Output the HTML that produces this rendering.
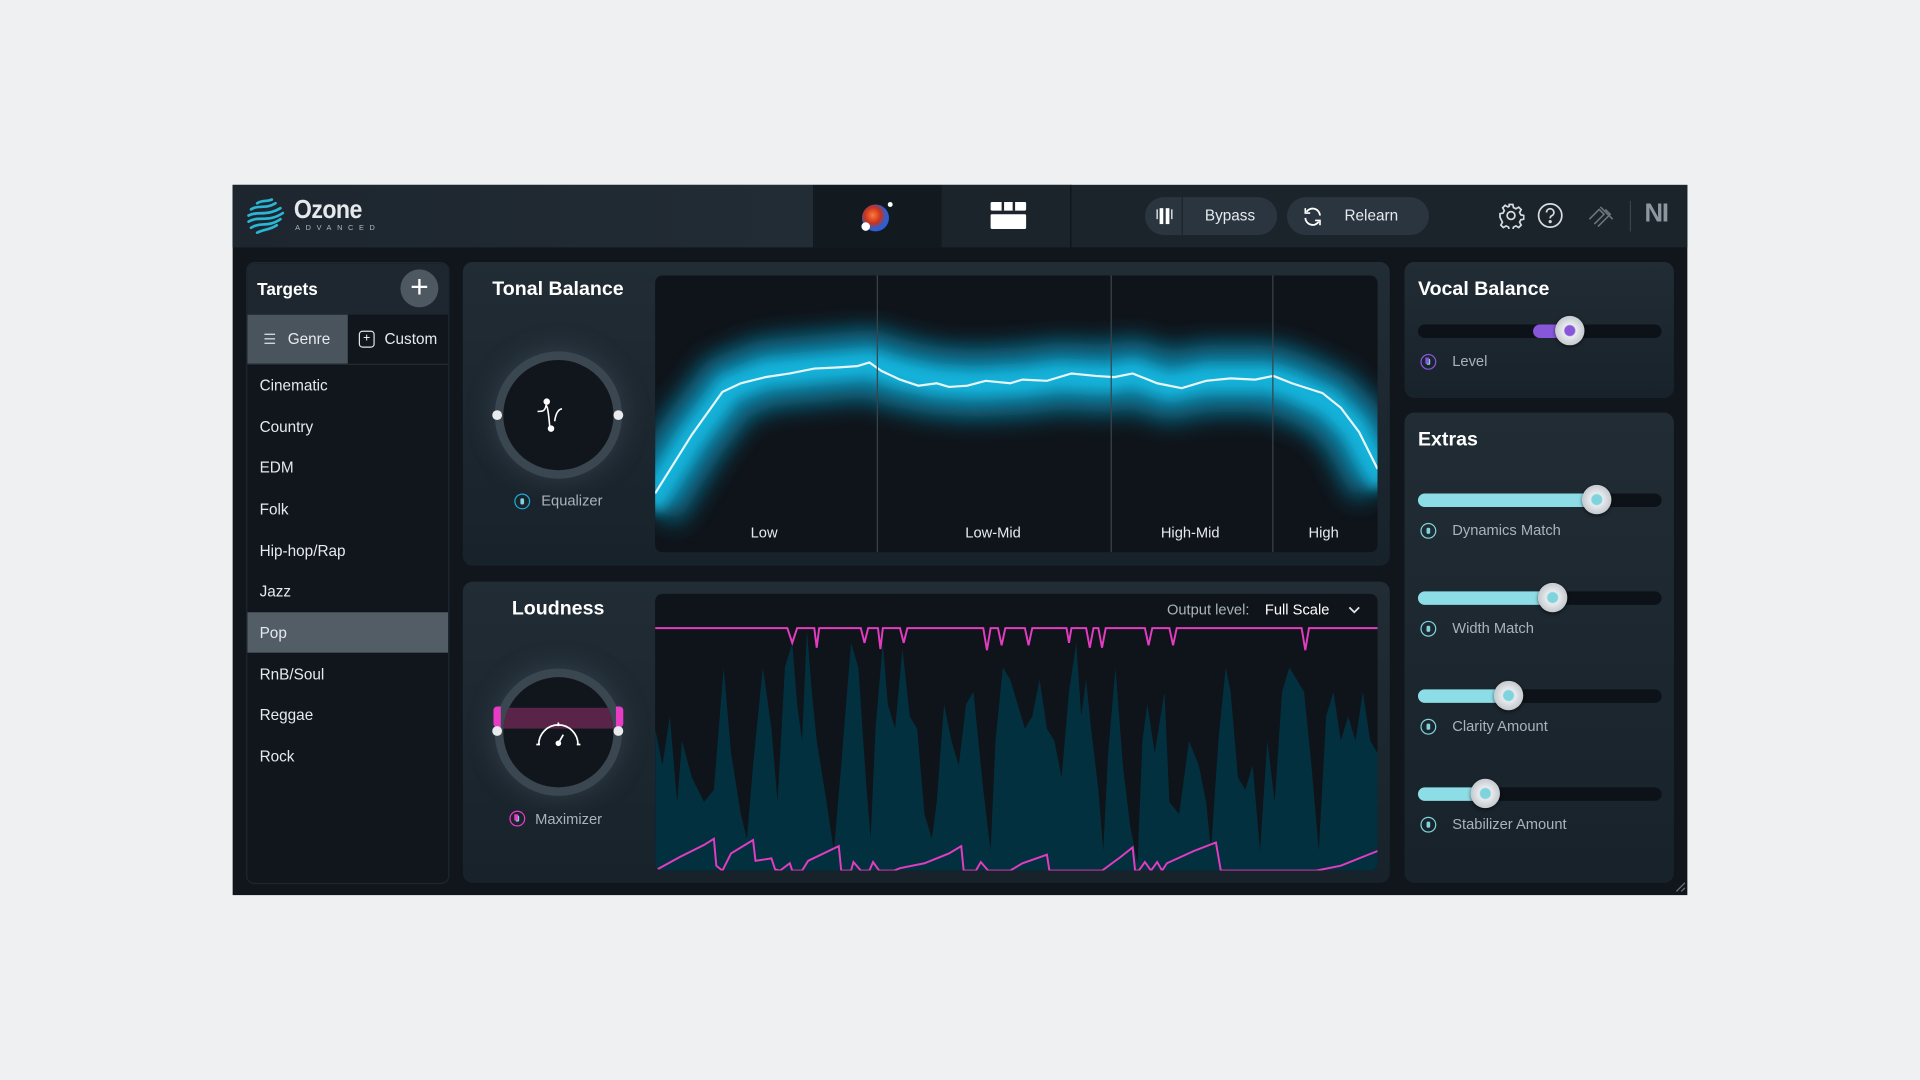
<!DOCTYPE html>
<html><head><meta charset="utf-8"><style>
html,body{margin:0;padding:0;width:1920px;height:1080px;overflow:hidden;background:#eef0f2;font-family:"Liberation Sans",sans-serif;}
#s{position:absolute;left:0;top:0;width:1568px;height:882px;transform:scale(1.22449);transform-origin:0 0;}
.a{position:absolute;}
.app{left:190px;top:151px;width:1188px;height:580px;background:#10161c;}
.hdr{left:0;top:0;width:1188px;height:51px;background:#1b232b;}
.panel{background:linear-gradient(#212c35,#18222a);border-radius:8px;}
.t{color:#fff;font-weight:bold;font-size:16px;}
.li{position:absolute;left:10px;color:#e6eaee;font-size:12.5px;}
.lab{color:#aab3bb;font-size:12px;}
.pill{background:#2a353f;border-radius:16px;color:#e6eaee;font-size:12.5px;}
.track{position:absolute;left:11px;width:199px;height:11px;border-radius:6px;background:#0c1218;}
.fill{position:absolute;left:0;top:0;height:11px;border-radius:6px;background:#8ddde6;}
.knob{position:absolute;top:-7px;width:24px;height:24px;border-radius:50%;background:radial-gradient(circle at 50% 50%,#7fd3dc 0 4px,#e8ebee 5px,#c4c9ce 12px);box-shadow:0 1px 3px rgba(0,0,0,.6);}
.pw{position:absolute;width:13px;height:13px;border-radius:50%;border:1.5px solid #7fd3dc;box-sizing:border-box;}
.pw:after{content:"";position:absolute;left:3.5px;top:2.5px;width:3px;height:5px;border-radius:1px;background:#7fd3dc;}
</style></head><body><div id="s">
<div class="a app">
 <div class="a hdr">
  <div class="a" style="left:0;top:0;width:474px;height:51px;background:linear-gradient(90deg,#1d262e,#222c35)"></div>
  <svg class="a" style="left:10px;top:9px" width="34" height="34" viewBox="0 0 34 34"><g stroke="#2bb6d6" stroke-width="2.2" fill="none" stroke-linecap="round"><path d="M10 6c4-3 8-1 12-3"/><path d="M5 11c6-4 12 0 20-5"/><path d="M3 16c8-4 14 1 26-6"/><path d="M3 21c8-5 16 1 28-7"/><path d="M5 26c8-5 14 0 24-7"/><path d="M10 30c6-3 10-2 16-6"/></g></svg>
  <div class="a" style="left:50px;top:9px;color:#e6e9ec;font-size:21px;font-weight:bold;letter-spacing:-0.5px;transform:scaleX(.9);transform-origin:0 0">Ozone</div>
  <div class="a" style="left:51px;top:33px;color:#aeb7bf;font-size:6px;letter-spacing:4.6px">ADVANCED</div>
  <div class="a" style="left:474px;top:0;width:105px;height:51px;background:#12191f"></div>
  <svg class="a" style="left:510px;top:12px" width="32" height="28" viewBox="0 0 32 28"><defs><radialGradient id="og" cx="40%" cy="40%"><stop offset="0" stop-color="#ff7a3a"/><stop offset=".6" stop-color="#c8321e"/><stop offset="1" stop-color="#2d5fd1"/></radialGradient></defs><circle cx="15" cy="15" r="11" fill="url(#og)"/><circle cx="7" cy="22" r="3.5" fill="#fff"/><circle cx="27" cy="4" r="2" fill="#fff"/></svg>
  <div class="a" style="left:579px;top:0;width:105px;height:51px;background:#1b232b;border-right:1px solid #0e1418"></div>
  <div class="a" style="left:619px;top:14px;width:29px;height:7px;background:#fff;border-radius:1px"></div>
  <div class="a" style="left:619px;top:24px;width:29px;height:12px;background:#fff;border-radius:1px"></div>
  <div class="a" style="left:628px;top:14px;width:2px;height:7px;background:#1b232b"></div><div class="a" style="left:637px;top:14px;width:2px;height:7px;background:#1b232b"></div>
  <div class="a pill" style="left:745px;top:10px;width:108px;height:31px"><div class="a" style="left:30px;top:0;width:1px;height:31px;background:#1b232b"></div>
   <svg class="a" style="left:8px;top:7px" width="16" height="17" viewBox="0 0 16 17"><rect x="4" y="2" width="3" height="13" fill="#fff"/><rect x="9" y="2" width="3" height="13" fill="#fff"/><path d="M2 3v8M14 3v8" stroke="#fff" stroke-width="1"/></svg>
   <div class="a" style="left:49px;top:8px">Bypass</div></div>
  <div class="a pill" style="left:861px;top:10px;width:116px;height:31px">
   <svg class="a" style="left:12px;top:7px" width="18" height="18" viewBox="0 0 18 18" fill="none" stroke="#fff" stroke-width="1.5"><path d="M15 8a6 6 0 0 0-11-3M3 10a6 6 0 0 0 11 3"/><path d="M3 2v4h4M15 16v-4h-4" stroke-width="1.3"/></svg>
   <div class="a" style="left:47px;top:8px">Relearn</div></div>
  <svg class="a" style="left:1033px;top:14px" width="22" height="22" viewBox="0 0 22 22" fill="none" stroke="#d7dce0" stroke-width="1.4"><circle cx="11" cy="11" r="3.2"/><path d="M9.5 2h3l.5 2.5 2 1 2.3-1.3 2 2-1.3 2.3 1 2 2.5.5v3l-2.5.5-1 2 1.3 2.3-2 2-2.3-1.3-2 1-.5 2.5h-3l-.5-2.5-2-1-2.3 1.3-2-2 1.3-2.3-1-2L2 12.5v-3l2.5-.5 1-2L4.2 4.7l2-2L8.5 4l1-.5z"/></svg>
  <svg class="a" style="left:1065px;top:14px" width="22" height="22" viewBox="0 0 22 22" fill="none" stroke="#d7dce0" stroke-width="1.4"><circle cx="11" cy="11" r="9.5"/><path d="M8 8.5a3 3 0 1 1 4 2.8c-.8.4-1 1-1 2"/><circle cx="11" cy="16" r=".6" fill="#d7dce0"/></svg>
  <svg class="a" style="left:1105px;top:12px" width="26" height="26" viewBox="0 0 26 26" fill="none" stroke="#6b747c" stroke-width="1.3"><path d="M3 16l8-8 4 4-8 8M10 22l10-10-4-4M12 6l10 10"/></svg>
  <div class="a" style="left:1141px;top:13px;width:1px;height:25px;background:#3a444d"></div>
  <div class="a" style="left:1153px;top:12px;color:#8d969e;font-size:21px;font-weight:bold;letter-spacing:-1px">NI</div>
 </div>
 <!-- Targets -->
 <div class="a" style="left:11px;top:63px;width:164px;height:506px;background:#10161c;border-radius:7px;border:1px solid #1e272f;overflow:hidden">
  <div class="a" style="left:0;top:0;width:164px;height:42px;background:#1e272f"></div>
  <div class="a t" style="left:8px;top:13px;font-size:14px">Targets</div>
  <div class="a" style="left:125px;top:5px;width:31px;height:31px;border-radius:50%;background:#4d5861;color:#fff;font-size:26px;line-height:29px;text-align:center;font-weight:300">+</div>
  <div class="a" style="left:0;top:42px;width:82px;height:40px;background:#4a545d"></div>
  <div class="a" style="left:0;top:82px;width:164px;height:1px;background:#232c34"></div>
  <div class="a" style="left:13px;top:55px;color:#cfd5da;font-size:12px">☰</div>
  <div class="a" style="left:33px;top:55px;color:#e6eaee;font-size:12.5px">Genre</div>
  <div class="a" style="left:91px;top:55px;width:11px;height:12px;border:1.3px solid #dfe3e7;border-radius:3px;color:#fff;font-size:10px;line-height:12px;text-align:center">+</div>
  <div class="a" style="left:112px;top:55px;color:#e6eaee;font-size:12.5px">Custom</div>
  <div class="li" style="top:93px">Cinematic</div>
  <div class="li" style="top:127px">Country</div>
  <div class="li" style="top:160px">EDM</div>
  <div class="li" style="top:194px">Folk</div>
  <div class="li" style="top:228px">Hip-hop/Rap</div>
  <div class="li" style="top:261px">Jazz</div>
  <div class="a" style="left:0;top:285px;width:164px;height:33px;background:#535d66"></div>
  <div class="li" style="top:295px">Pop</div>
  <div class="li" style="top:329px">RnB/Soul</div>
  <div class="li" style="top:362px">Reggae</div>
  <div class="li" style="top:396px">Rock</div>
 </div>
 <!-- Tonal Balance -->
 <div class="a panel" style="left:188px;top:63px;width:757px;height:248px">
  <div class="a t" style="left:24px;top:14px">Tonal Balance</div>
  <div class="a" style="left:26px;top:73px;width:104px;height:104px;border-radius:50%;background:#3a4650;box-shadow:0 0 24px rgba(120,140,160,.25)"></div>
  <div class="a" style="left:33px;top:80px;width:90px;height:90px;border-radius:50%;background:#10161c"></div>
  <div class="a" style="left:24px;top:121px;width:8px;height:8px;border-radius:50%;background:#e8eaec"></div>
  <div class="a" style="left:123px;top:121px;width:8px;height:8px;border-radius:50%;background:#e8eaec"></div>
  <svg class="a" style="left:58px;top:108px" width="40" height="34" viewBox="0 0 40 34" fill="none" stroke="#fff" stroke-width="1.3"><path d="M3 14c4 0 6 0 7-5 1 0 2 6 3 18M17 22c1-8 4-10 6-10"/><circle cx="10.5" cy="6" r="2" fill="#fff"/><circle cx="14" cy="28" r="2" fill="#fff"/></svg>
  <div class="pw" style="left:42px;top:189px;border-color:#22a9d6"></div>
  <div class="a lab" style="left:64px;top:188px">Equalizer</div>
  <div class="a" style="left:157px;top:11px;width:590px;height:226px;background:#0f141a;border-radius:6px;overflow:hidden">
   <svg width="590" height="226" viewBox="0 0 590 226">
    <defs><filter id="bl" x="-10%" y="-40%" width="120%" height="180%"><feGaussianBlur stdDeviation="10"/></filter><filter id="bl2" x="-10%" y="-40%" width="120%" height="180%"><feGaussianBlur stdDeviation="5"/></filter></defs>
    <path d="M-5 188 L30 132 L60 92 L90 80 L130 76 L175 72 L200 80 L230 86 L260 88 L300 86 L330 82 L370 84 L390 80 L420 90 L450 84 L500 84 L520 90 L550 104 L570 124 L595 170" stroke="#0a8fb5" stroke-width="55" fill="none" filter="url(#bl)" opacity=".85"/>
    <path d="M-5 188 L30 132 L60 92 L90 80 L130 76 L175 72 L200 80 L230 86 L260 88 L300 86 L330 82 L370 84 L390 80 L420 90 L450 84 L500 84 L520 90 L550 104 L570 124 L595 170" stroke="#12b8e0" stroke-width="22" fill="none" filter="url(#bl2)" opacity=".9"/>
    <path d="M0 178 L30 130 L55 95 L70 88 L90 83 L110 80 L130 76 L150 75 L165 74 L175 71 L185 78 L200 85 L215 90 L230 88 L240 91 L255 90 L270 86 L290 88 L300 85 L320 86 L340 80 L360 82 L375 83 L390 80 L410 88 L430 92 L450 86 L470 84 L490 85 L505 82 L520 88 L545 96 L560 108 L575 128 L590 158" stroke="#e8f6fa" stroke-width="1.8" fill="none"/>
    <g stroke="#3a444c" stroke-width="1"><line x1="181.5" y1="0" x2="181.5" y2="226"/><line x1="372.5" y1="0" x2="372.5" y2="226"/><line x1="504.5" y1="0" x2="504.5" y2="226"/></g>
    <g fill="#e6eaee" font-family="Liberation Sans" font-size="12" text-anchor="middle"><text x="89" y="214">Low</text><text x="276" y="214">Low-Mid</text><text x="437" y="214">High-Mid</text><text x="546" y="214">High</text></g>
   </svg>
  </div>
 </div>
 <!-- Loudness -->
 <div class="a panel" style="left:188px;top:324px;width:757px;height:246px">
  <div class="a t" style="left:40px;top:14px">Loudness</div>
  <div class="a" style="left:26px;top:71px;width:104px;height:104px;border-radius:50%;background:#3a4650;box-shadow:0 0 24px rgba(120,140,160,.25);overflow:hidden"></div>
  <div class="a" style="left:33px;top:78px;width:90px;height:90px;border-radius:50%;background:#10161c;overflow:hidden"><div class="a" style="left:0;top:25px;width:90px;height:17px;background:#5a2449"></div></div>
  <div class="a" style="left:25px;top:102px;width:6px;height:17px;background:#e83cc4;border-radius:3px 0 0 3px"></div>
  <div class="a" style="left:125px;top:102px;width:6px;height:17px;background:#e83cc4;border-radius:0 3px 3px 0"></div>
  <div class="a" style="left:24px;top:118px;width:8px;height:8px;border-radius:50%;background:#e8eaec"></div>
  <div class="a" style="left:123px;top:118px;width:8px;height:8px;border-radius:50%;background:#e8eaec"></div>
  <svg class="a" style="left:58px;top:111px" width="40" height="26" viewBox="0 0 40 26" fill="none" stroke="#fff" stroke-width="1.4"><path d="M4 22a16 16 0 1 1 32 0M2 22h3M35 22h3M20 4v3M20 21l4-7"/><circle cx="20" cy="21" r="1.6" fill="#fff"/></svg>
  <div class="pw" style="left:38px;top:187px;border-color:#e83cc4"></div><div class="a" style="left:41.5px;top:190px;width:3px;height:5px;background:#e83cc4"></div>
  <div class="a lab" style="left:59px;top:187px">Maximizer</div>
  <div class="a" style="left:157px;top:10px;width:590px;height:226px;background:#0f141a;border-radius:6px;overflow:hidden">
   <div class="a lab" style="left:418px;top:6px;font-size:12px">Output level:</div>
   <div class="a" style="left:498px;top:6px;color:#fff;font-size:12px">Full Scale</div>
   <svg class="a" style="left:566px;top:9px" width="10" height="8" viewBox="0 0 10 8"><path d="M1 2l4 4 4-4" stroke="#dfe3e7" stroke-width="1.5" fill="none"/></svg>
   <svg class="a" style="left:0;top:0" width="590" height="226" viewBox="0 0 590 226">
    <path fill="#03303f" d="M0 226 L0 110 L6 140 L12 100 L18 170 L22 120 L30 150 L40 170 L48 160 L56 60 L62 130 L70 180 L75 200 L80 140 L88 60 L95 110 L100 170 L106 60 L112 40 L116 90 L120 120 L124 30 L128 80 L132 120 L140 170 L146 210 L152 140 L160 40 L166 60 L172 150 L176 200 L180 110 L186 40 L190 90 L196 110 L202 45 L208 100 L214 110 L220 180 L226 200 L230 170 L236 90 L242 120 L248 140 L254 90 L260 80 L268 160 L274 210 L278 120 L284 60 L290 70 L296 90 L302 110 L308 100 L314 70 L320 110 L326 120 L332 150 L338 80 L344 40 L348 100 L352 70 L356 110 L362 160 L366 210 L370 130 L376 60 L382 140 L388 190 L394 220 L398 120 L402 90 L408 130 L416 80 L420 170 L428 180 L436 120 L444 140 L450 170 L454 210 L460 120 L466 60 L470 80 L476 150 L482 160 L488 140 L494 210 L500 120 L506 170 L512 80 L518 60 L524 70 L530 80 L536 140 L542 210 L548 100 L554 80 L560 120 L566 100 L572 120 L578 80 L584 120 L590 130 L590 226 Z"/>
    <path fill="none" stroke="#e33cc0" stroke-width="1.6" d="M0 28 L108 28 L112 40 L116 28 L130 28 L132 44 L134 28 L168 28 L171 40 L174 28 L182 28 L184 45 L186 28 L200 28 L203 40 L206 28 L268 28 L271 46 L274 28 L280 28 L283 42 L286 28 L302 28 L305 42 L308 28 L336 28 L338 40 L340 28 L352 28 L355 44 L358 28 L362 28 L365 44 L368 28 L400 28 L403 42 L406 28 L420 28 L423 42 L426 28 L528 28 L531 46 L534 28 L590 28"/>
    <path fill="none" stroke="#e33cc0" stroke-width="1.6" d="M0 226 L20 215 L40 205 L48 200 L50 222 L55 226 L62 212 L80 201 L82 218 L95 216 L98 225 L102 226 L110 220 L112 226 L120 226 L125 218 L150 206 L152 226 L160 226 L162 219 L168 226 L175 226 L178 219 L183 226 L195 226 L200 224 L220 220 L240 212 L250 206 L252 226 L262 226 L266 219 L272 226 L290 226 L300 220 L320 213 L322 226 L330 226 L340 226 L350 226 L365 226 L380 215 L390 207 L392 226 L395 226 L400 219 L405 226 L410 219 L414 226 L418 220 L440 210 L458 203 L462 226 L480 226 L490 226 L520 226 L540 226 L560 222 L590 210"/>
   </svg>
  </div>
 </div>
 <!-- Vocal balance -->
 <div class="a panel" style="left:957px;top:63px;width:220px;height:111px">
  <div class="a t" style="left:11px;top:14px">Vocal Balance</div>
  <div class="track" style="top:51px"><div class="fill" style="left:94px;width:30px;background:#8857d9"></div><div class="knob" style="left:112px;background:radial-gradient(circle,#8857d9 0 4px,#e8ebee 5px,#c4c9ce 12px)"></div></div>
  <div class="pw" style="left:13px;top:75px;border-color:#8857d9"></div><div class="a" style="left:16.5px;top:78px;width:3px;height:5px;background:#8857d9"></div>
  <div class="a lab" style="left:39px;top:74px">Level</div>
 </div>
 <!-- Extras -->
 <div class="a panel" style="left:957px;top:186px;width:220px;height:384px">
  <div class="a t" style="left:11px;top:14px">Extras</div>
  <div class="track" style="top:66px"><div class="fill" style="width:146px"></div><div class="knob" style="left:134px"></div></div>
  <div class="pw" style="left:13px;top:90px"></div><div class="a lab" style="left:39px;top:89px">Dynamics Match</div>
  <div class="track" style="top:146px"><div class="fill" style="width:110px"></div><div class="knob" style="left:98px"></div></div>
  <div class="pw" style="left:13px;top:170px"></div><div class="a lab" style="left:39px;top:169px">Width Match</div>
  <div class="track" style="top:226px"><div class="fill" style="width:74px"></div><div class="knob" style="left:62px"></div></div>
  <div class="pw" style="left:13px;top:250px"></div><div class="a lab" style="left:39px;top:249px">Clarity Amount</div>
  <div class="track" style="top:306px"><div class="fill" style="width:55px"></div><div class="knob" style="left:43px"></div></div>
  <div class="pw" style="left:13px;top:330px"></div><div class="a lab" style="left:39px;top:329px">Stabilizer Amount</div>
 </div>
 <svg class="a" style="left:1178px;top:569px" width="9" height="9" viewBox="0 0 9 9" stroke="#6b747c"><path d="M1 8l7-7M5 8l3-3"/></svg>
</div>
</div></body></html>
